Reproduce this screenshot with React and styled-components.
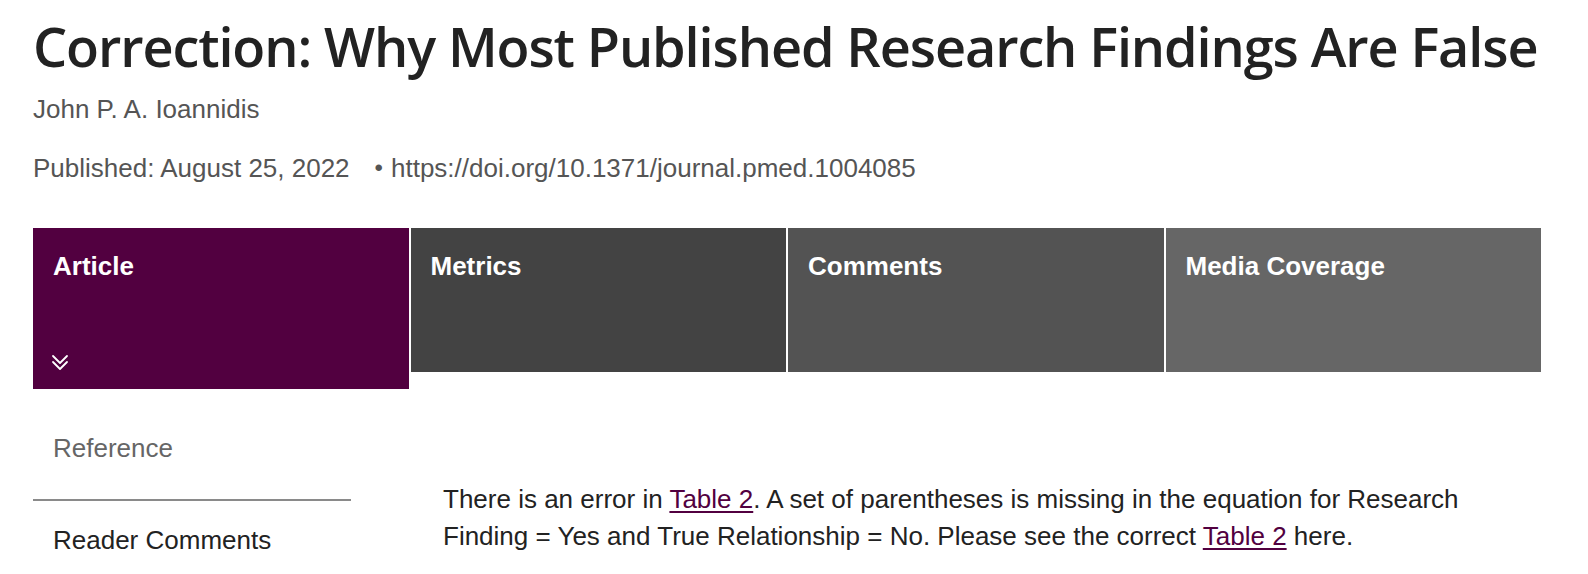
import React from "react";
import styled, { createGlobalStyle } from "styled-components";

const Global = createGlobalStyle`
  html, body { margin: 0; padding: 0; background: #fff; }
  body { font-family: "Liberation Sans", Arial, sans-serif; }
`;

const Page = styled.div`
  padding: 14px 48px 0 33px;
`;

const Title = styled.h1`
  margin: 0;
  font-family: "Open Sans", sans-serif;
  font-weight: 600;
  font-size: 54px;
  line-height: 64px;
  color: #222;
  letter-spacing: -1.1px;
  white-space: nowrap;
`;

const Meta = styled.p`
  margin: ${(p) => p.$mt}px 0 0;
  font-size: 26px;
  line-height: 30px;
  color: #555;
`;

const Dot = styled.span`
  margin: 0 8px 0 25px;
  font-size: 24px;
  vertical-align: 1px;
`;

const Tabs = styled.div`
  display: grid;
  grid-template-columns: repeat(4, 1fr);
  gap: 2px;
  margin-top: 45px;
  width: 1508px;
  align-items: start;
`;

const Tab = styled.div`
  background: ${(p) => p.$bg};
  height: ${(p) => (p.$active ? 161 : 144)}px;
  padding: 23px 20px 0;
  box-sizing: border-box;
  color: #fff;
  font-weight: 700;
  font-size: 26px;
  line-height: 30px;
  display: flex;
  flex-direction: column;
  justify-content: space-between;
`;

const Chevron = styled.svg`
  width: 22px;
  height: 22px;
  margin: 0 0 15px -4px;
  display: block;
`;

const Body = styled.div`
  display: grid;
  grid-template-columns: 318px 1fr;
  column-gap: 92px;
`;

const Side = styled.nav`
  display: flex;
  flex-direction: column;
  padding-top: 44px;
`;

const SideItem = styled.div`
  padding: ${(p) => p.$pt || 0}px 20px 0;
  font-size: 26px;
  line-height: 30px;
  color: ${(p) => (p.$dim ? "#666" : "#222")};
  height: ${(p) => p.$h}px;
  box-sizing: border-box;
  border-bottom: ${(p) => (p.$line ? "2px solid #8a8a8a" : "none")};
`;

const Text = styled.p`
  margin: 92px 0 0;
  width: 1050px;
  font-size: 26px;
  line-height: 36.5px;
  color: #222;
`;

const Link = styled.a`
  color: #520040;
  text-decoration: underline;
  text-underline-offset: 3px;
`;

const tabs = [
  { label: "Article", bg: "#520040", active: true },
  { label: "Metrics", bg: "#434343" },
  { label: "Comments", bg: "#535353" },
  { label: "Media Coverage", bg: "#666666" },
];

export default function App() {
  return (
    <>
      <Global />
      <Page>
        <Title>Correction: Why Most Published Research Findings Are False</Title>
        <Meta $mt={16}>John P. A. Ioannidis</Meta>
        <Meta $mt={29}>
          Published: August 25, 2022<Dot>•</Dot>https://doi.org/10.1371/journal.pmed.1004085
        </Meta>
        <Tabs>
          {tabs.map((t) => (
            <Tab key={t.label} $bg={t.bg} $active={t.active}>
              <span>{t.label}</span>
              {t.active && (
                <Chevron viewBox="0 0 22 22" fill="none" stroke="#fff" strokeWidth="1.8" strokeLinecap="round" strokeLinejoin="round">
                  <polyline points="4,4 11,11 18,4" />
                  <polyline points="4,10 11,17 18,10" />
                </Chevron>
              )}
            </Tab>
          ))}
        </Tabs>
        <Body>
          <Side>
            <SideItem $dim $line $h={68}>Reference</SideItem>
            <SideItem $h={60} $pt={24}>Reader Comments</SideItem>
          </Side>
          <Text>
            There is an error in <Link href="#">Table 2</Link>. A set of parentheses is missing in the equation for Research Finding = Yes and True Relationship = No. Please see the correct <Link href="#">Table 2</Link> here.
          </Text>
        </Body>
      </Page>
    </>
  );
}
